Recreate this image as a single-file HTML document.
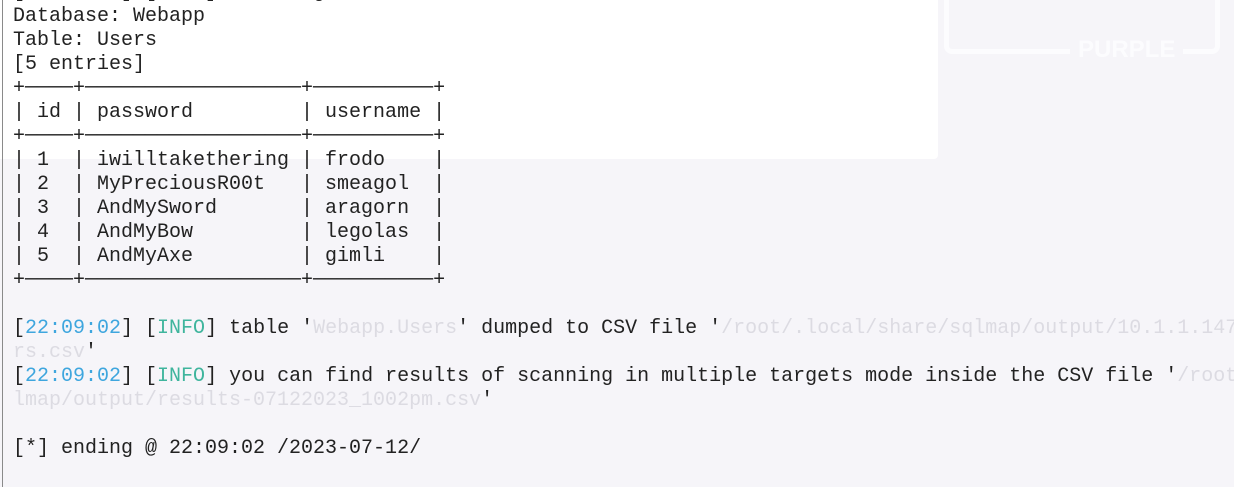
<!DOCTYPE html>
<html><head><style>
html,body{margin:0;padding:0;width:1234px;height:487px;overflow:hidden;background:#f6f5f9;}
.w{position:absolute;left:0;top:0;width:938px;height:159px;background:#fff;border-bottom-right-radius:4px;}
.lb{position:absolute;left:2px;top:0;width:1px;height:487px;background:#8a8a8a;}
.logo{position:absolute;left:1070px;top:36px;padding:0 8px;font:bold 24px "Liberation Sans",sans-serif;color:#fcfcfe;background:#f6f5f9;}
.lbox{position:absolute;left:944px;top:-5px;width:266px;height:54px;border:5px solid #fcfcfe;border-top:none;border-radius:0 0 8px 8px;}
pre{position:absolute;left:13px;top:-19px;margin:0;font:20px/24px "Liberation Mono","DejaVu Sans Mono",monospace;color:#222;white-space:pre;}
.b{color:#3ea6de}.t{color:#3fb59d}.f{color:#dcdbe2}
</style></head><body>
<div class="w"></div>
<div class="lbox"></div>
<div class="logo">PURPLE</div>
<div class="lb"></div>
<pre>[22:09:02] [INFO] fetching entries for table
Database: Webapp
Table: Users
[5 entries]
+────+──────────────────+──────────+
| id | password         | username |
+────+──────────────────+──────────+
| 1  | iwilltakethering | frodo    |
| 2  | MyPreciousR00t   | smeagol  |
| 3  | AndMySword       | aragorn  |
| 4  | AndMyBow         | legolas  |
| 5  | AndMyAxe         | gimli    |
+────+──────────────────+──────────+

[<span class="b">22:09:02</span>] [<span class="t">INFO</span>] table '<span class="f">Webapp.Users</span>' dumped to CSV file '<span class="f">/root/.local/share/sqlmap/output/10.1.1.147</span>
<span class="f">rs.csv</span>'
[<span class="b">22:09:02</span>] [<span class="t">INFO</span>] you can find results of scanning in multiple targets mode inside the CSV file '<span class="f">/root</span>
<span class="f">lmap/output/results-07122023_1002pm.csv</span>'

[*] ending @ 22:09:02 /2023-07-12/
</pre>
</body></html>
